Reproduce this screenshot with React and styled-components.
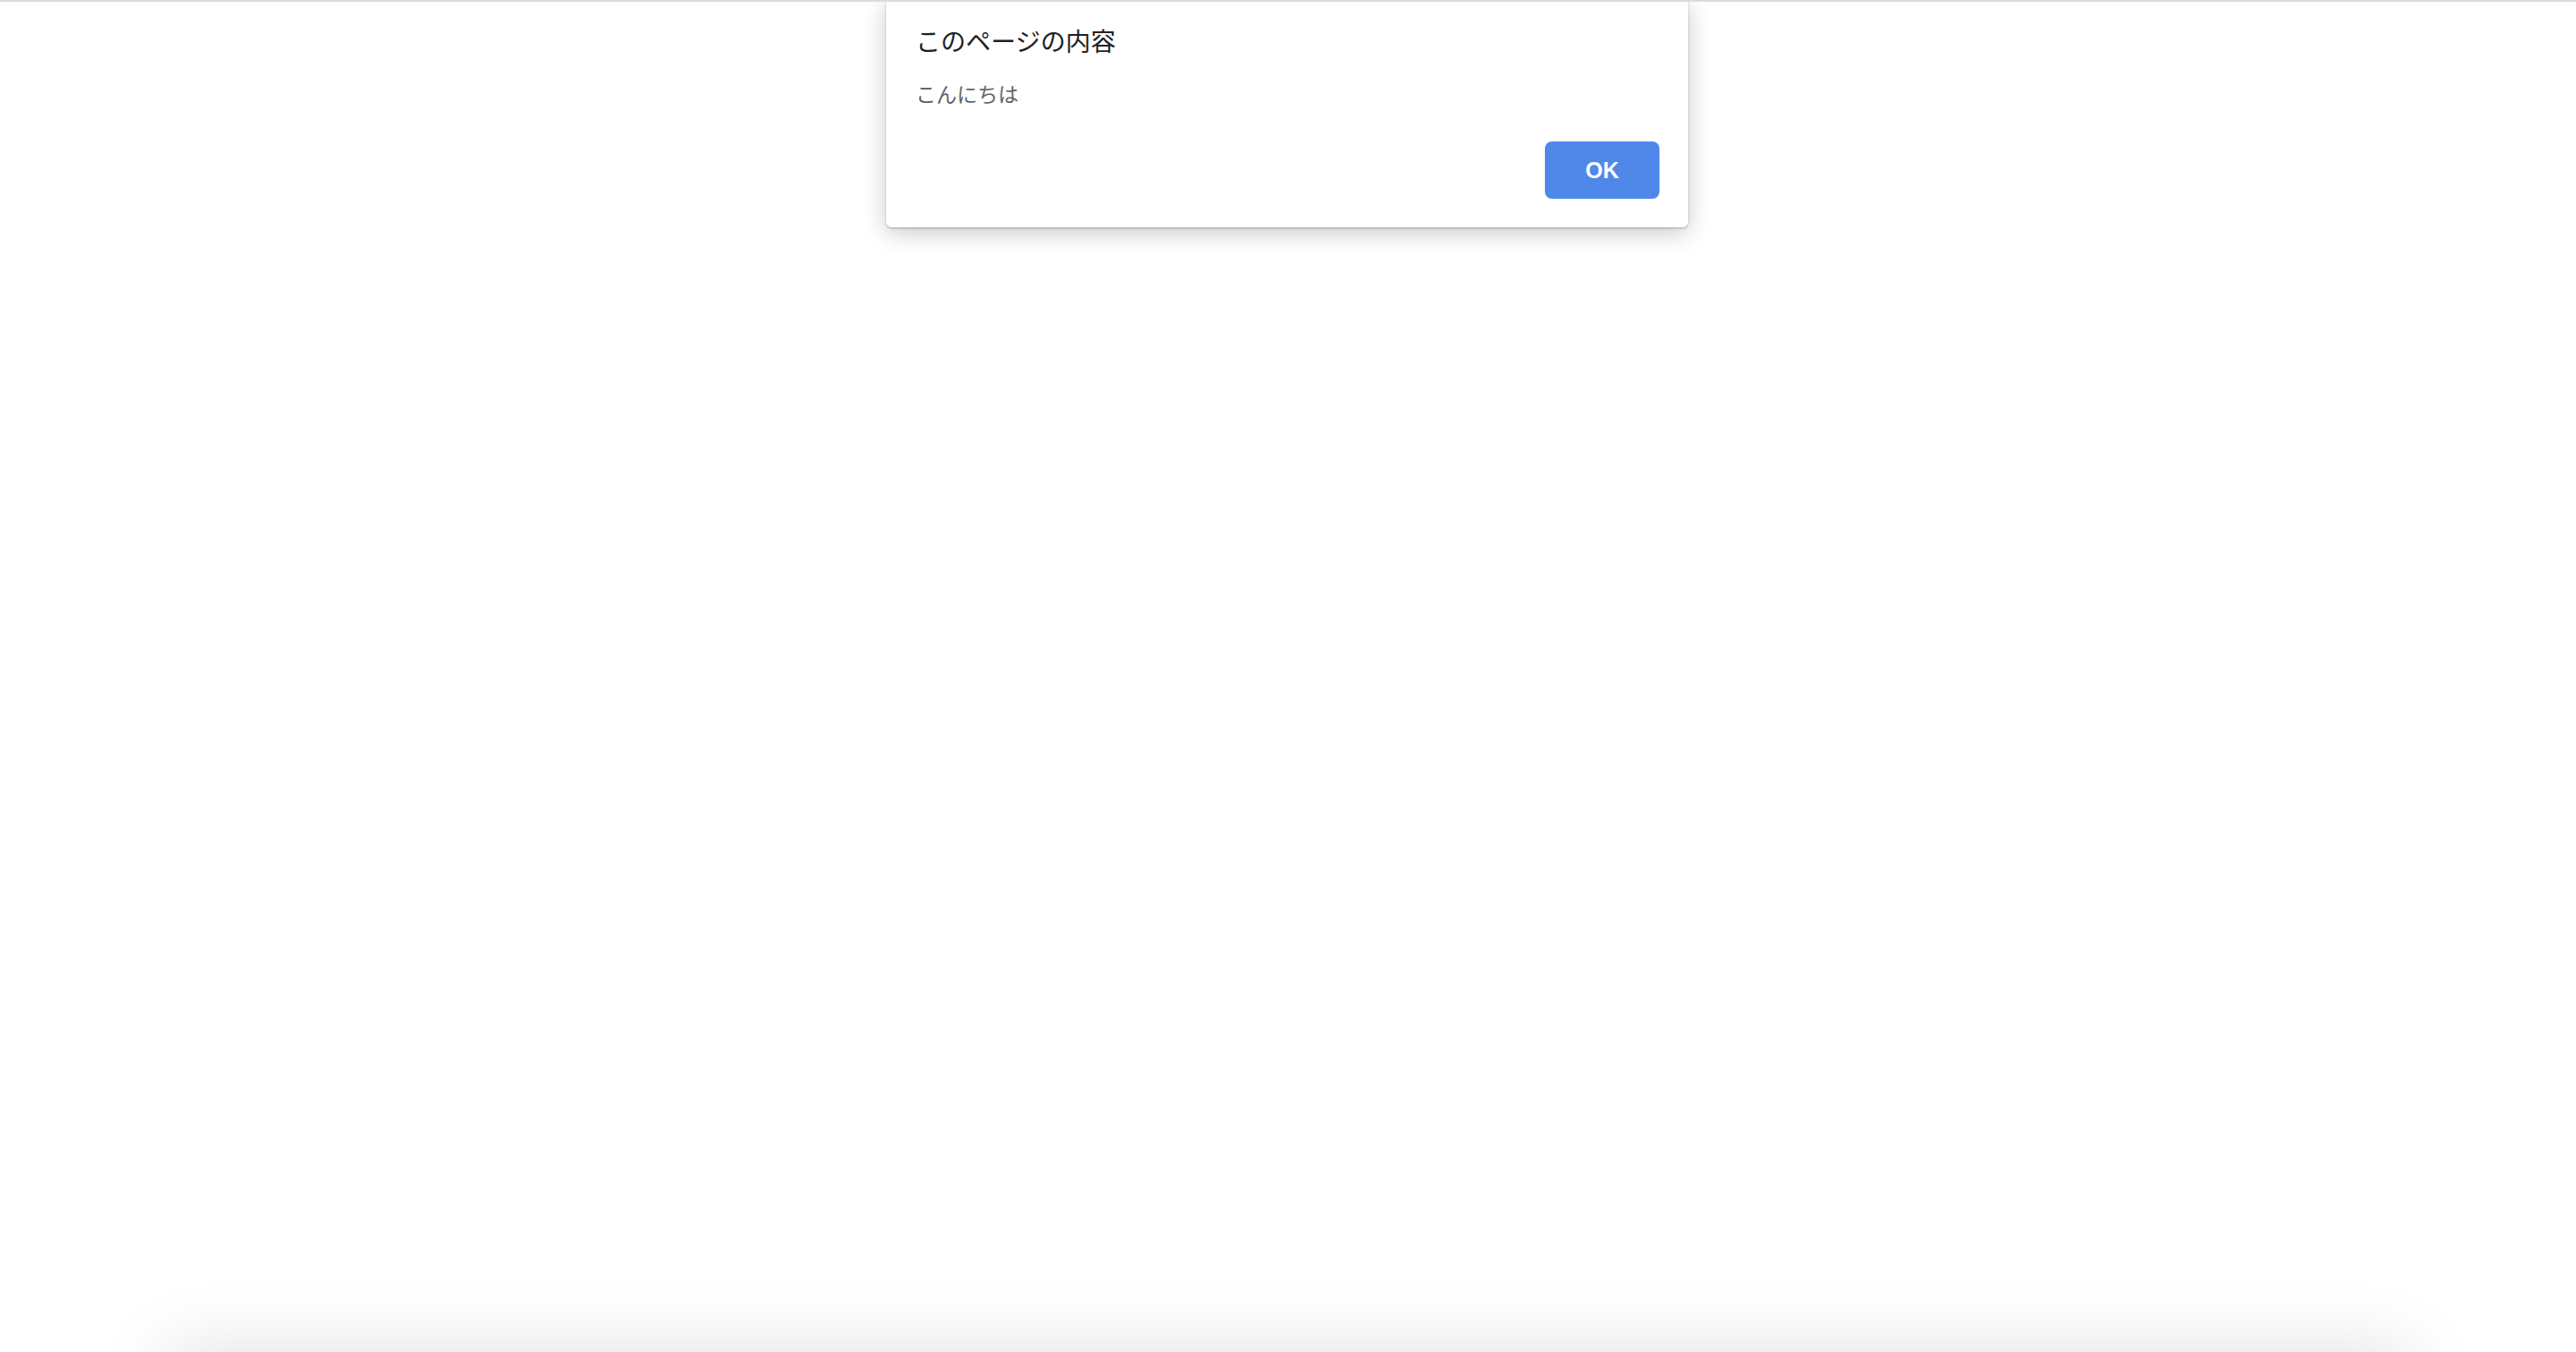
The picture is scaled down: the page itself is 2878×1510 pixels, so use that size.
import React from 'react';
import styled, { createGlobalStyle } from 'styled-components';

const GlobalStyle = createGlobalStyle`
  html, body {
    margin: 0;
    padding: 0;
    background: #ffffff;
  }
  body {
    font-family: "Liberation Sans", "Noto Sans CJK JP", sans-serif;
  }
`;

const Page = styled.div`
  position: relative;
  height: 1510px;
  overflow: hidden;
  display: flex;
  flex-direction: column;
  border-top: 2px solid #dcdce0;
  box-sizing: border-box;
`;

const Spacer = styled.div`
  flex: 1;
`;

// the page below the alert only shows as a soft shadow at the bottom edge
const Sheet = styled.div`
  height: 120px;
  margin: 0 205px -138px;
  background: #ffffff;
  box-shadow: 0 0 85px 18px rgba(0, 0, 0, 0.13);
`;

const Dialog = styled.div`
  position: absolute;
  top: -2px;
  left: 990px;
  width: 896px;
  box-sizing: border-box;
  padding: 31px 32px 32px 33px;
  background: #ffffff;
  border-radius: 0 0 6px 6px;
  box-shadow: 0 1px 2px rgba(0, 0, 0, 0.28), 0 6px 26px rgba(0, 0, 0, 0.22);
  display: flex;
  flex-direction: column;
`;

const Title = styled.div`
  font-family: "Noto Sans CJK JP", sans-serif;
  font-size: 28px;
  line-height: 28px;
  color: #202124;
`;

const Message = styled.div`
  margin-top: 34px;
  font-family: "Noto Sans CJK JP", sans-serif;
  font-size: 23px;
  line-height: 23px;
  color: #5f6368;
`;

const Actions = styled.div`
  margin-top: 42px;
  display: flex;
  justify-content: flex-end;
`;

const Button = styled.button`
  width: 128px;
  height: 64px;
  border: none;
  border-radius: 8px;
  background: #5088ea;
  color: #ffffff;
  font-family: "Liberation Sans", "Noto Sans", sans-serif;
  font-weight: 700;
  font-size: 25px;
  cursor: pointer;
`;

export default function App() {
  return (
    <>
      <GlobalStyle />
      <Page>
        <Spacer />
        <Sheet />
        <Dialog>
          <Title>このページの内容</Title>
          <Message>こんにちは</Message>
          <Actions>
            <Button>OK</Button>
          </Actions>
        </Dialog>
      </Page>
    </>
  );
}
